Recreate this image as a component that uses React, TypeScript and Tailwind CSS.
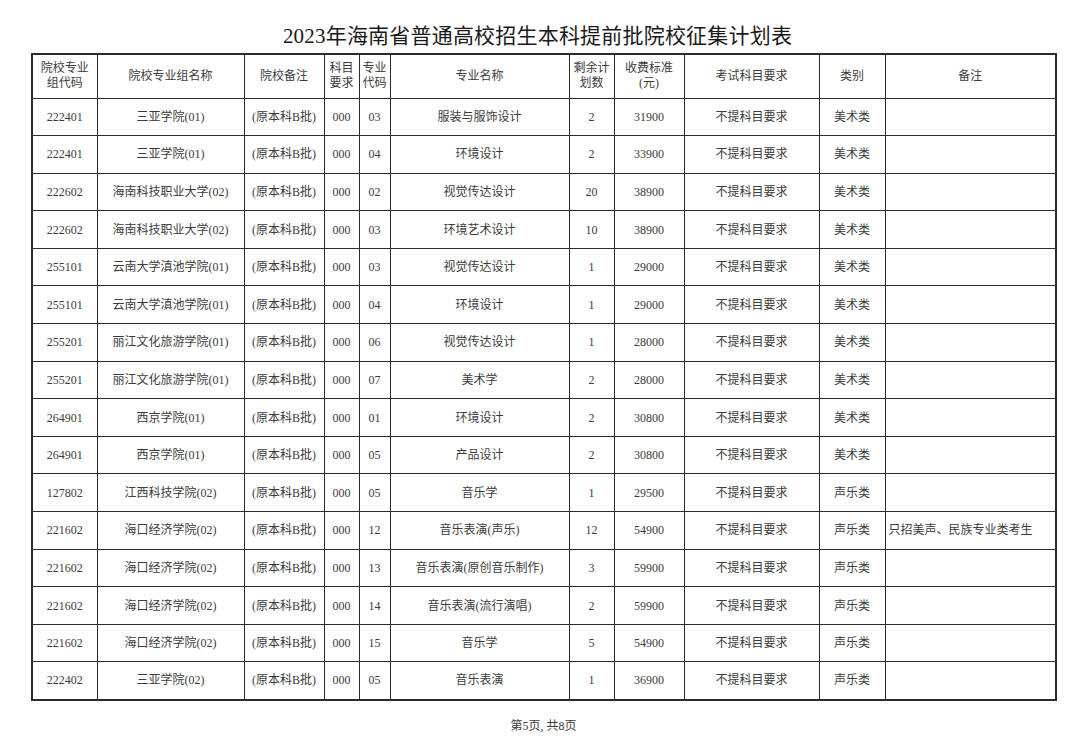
import React from "react";

const rows: string[][] = [
  ["222401", "三亚学院(01)", "(原本科B批)", "000", "03", "服装与服饰设计", "2", "31900", "不提科目要求", "美术类", ""],
  ["222401", "三亚学院(01)", "(原本科B批)", "000", "04", "环境设计", "2", "33900", "不提科目要求", "美术类", ""],
  ["222602", "海南科技职业大学(02)", "(原本科B批)", "000", "02", "视觉传达设计", "20", "38900", "不提科目要求", "美术类", ""],
  ["222602", "海南科技职业大学(02)", "(原本科B批)", "000", "03", "环境艺术设计", "10", "38900", "不提科目要求", "美术类", ""],
  ["255101", "云南大学滇池学院(01)", "(原本科B批)", "000", "03", "视觉传达设计", "1", "29000", "不提科目要求", "美术类", ""],
  ["255101", "云南大学滇池学院(01)", "(原本科B批)", "000", "04", "环境设计", "1", "29000", "不提科目要求", "美术类", ""],
  ["255201", "丽江文化旅游学院(01)", "(原本科B批)", "000", "06", "视觉传达设计", "1", "28000", "不提科目要求", "美术类", ""],
  ["255201", "丽江文化旅游学院(01)", "(原本科B批)", "000", "07", "美术学", "2", "28000", "不提科目要求", "美术类", ""],
  ["264901", "西京学院(01)", "(原本科B批)", "000", "01", "环境设计", "2", "30800", "不提科目要求", "美术类", ""],
  ["264901", "西京学院(01)", "(原本科B批)", "000", "05", "产品设计", "2", "30800", "不提科目要求", "美术类", ""],
  ["127802", "江西科技学院(02)", "(原本科B批)", "000", "05", "音乐学", "1", "29500", "不提科目要求", "声乐类", ""],
  ["221602", "海口经济学院(02)", "(原本科B批)", "000", "12", "音乐表演(声乐)", "12", "54900", "不提科目要求", "声乐类", "只招美声、民族专业类考生"],
  ["221602", "海口经济学院(02)", "(原本科B批)", "000", "13", "音乐表演(原创音乐制作)", "3", "59900", "不提科目要求", "声乐类", ""],
  ["221602", "海口经济学院(02)", "(原本科B批)", "000", "14", "音乐表演(流行演唱)", "2", "59900", "不提科目要求", "声乐类", ""],
  ["221602", "海口经济学院(02)", "(原本科B批)", "000", "15", "音乐学", "5", "54900", "不提科目要求", "声乐类", ""],
  ["222402", "三亚学院(02)", "(原本科B批)", "000", "05", "音乐表演", "1", "36900", "不提科目要求", "声乐类", ""],
];

const widths = [65, 147, 80, 35, 31, 179, 45, 70, 135, 66, 171];

const headers: React.ReactNode[] = [
  <>院校专业<br />组代码</>,
  "院校专业组名称",
  "院校备注",
  <>科目<br />要求</>,
  <>专业<br />代码</>,
  "专业名称",
  <>剩余计<br />划数</>,
  <>收费标准<br />(元)</>,
  "考试科目要求",
  "类别",
  "备注",
];

export default function App() {
  return (
    <div
      className="w-[1075px] h-[742px] bg-white text-[#3c3c3c] relative overflow-hidden"
      style={{ fontFamily: '"Liberation Serif", "Noto Sans CJK SC", serif' }}
    >
      <div className="pt-[24px] h-[53px] text-center text-[21px] leading-[24px] text-[#1a1a1a] tracking-[0.2px]">
        2023年海南省普通高校招生本科提前批院校征集计划表
      </div>
      <div className="pl-[31px]">
        <table className="table-fixed border-collapse border-2 border-[#2a2a2a] text-[12px]">
          <colgroup>
            {widths.map((w, i) => (
              <col key={i} style={{ width: w }} />
            ))}
          </colgroup>
          <thead>
            <tr className="h-[44px]">
              {headers.map((h, i) => (
                <th
                  key={i}
                  className="border border-[#2a2a2a] font-normal text-center align-middle leading-[15px] p-0 text-[12px]"
                >
                  {h}
                </th>
              ))}
            </tr>
          </thead>
          <tbody>
            {rows.map((r, ri) => (
              <tr key={ri} className="h-[37.6px]">
                {r.map((c, ci) => (
                  <td
                    key={ci}
                    className={
                      "border border-[#2a2a2a] align-middle p-0 whitespace-nowrap " +
                      (ci === 10 ? "text-left pl-[3px]" : "text-center")
                    }
                  >
                    {c}
                  </td>
                ))}
              </tr>
            ))}
          </tbody>
        </table>
      </div>
      <div className="absolute left-0 right-0 top-[718px] text-center text-[12px] leading-[16px] pl-[12px]">
        第5页, 共8页
      </div>
    </div>
  );
}
